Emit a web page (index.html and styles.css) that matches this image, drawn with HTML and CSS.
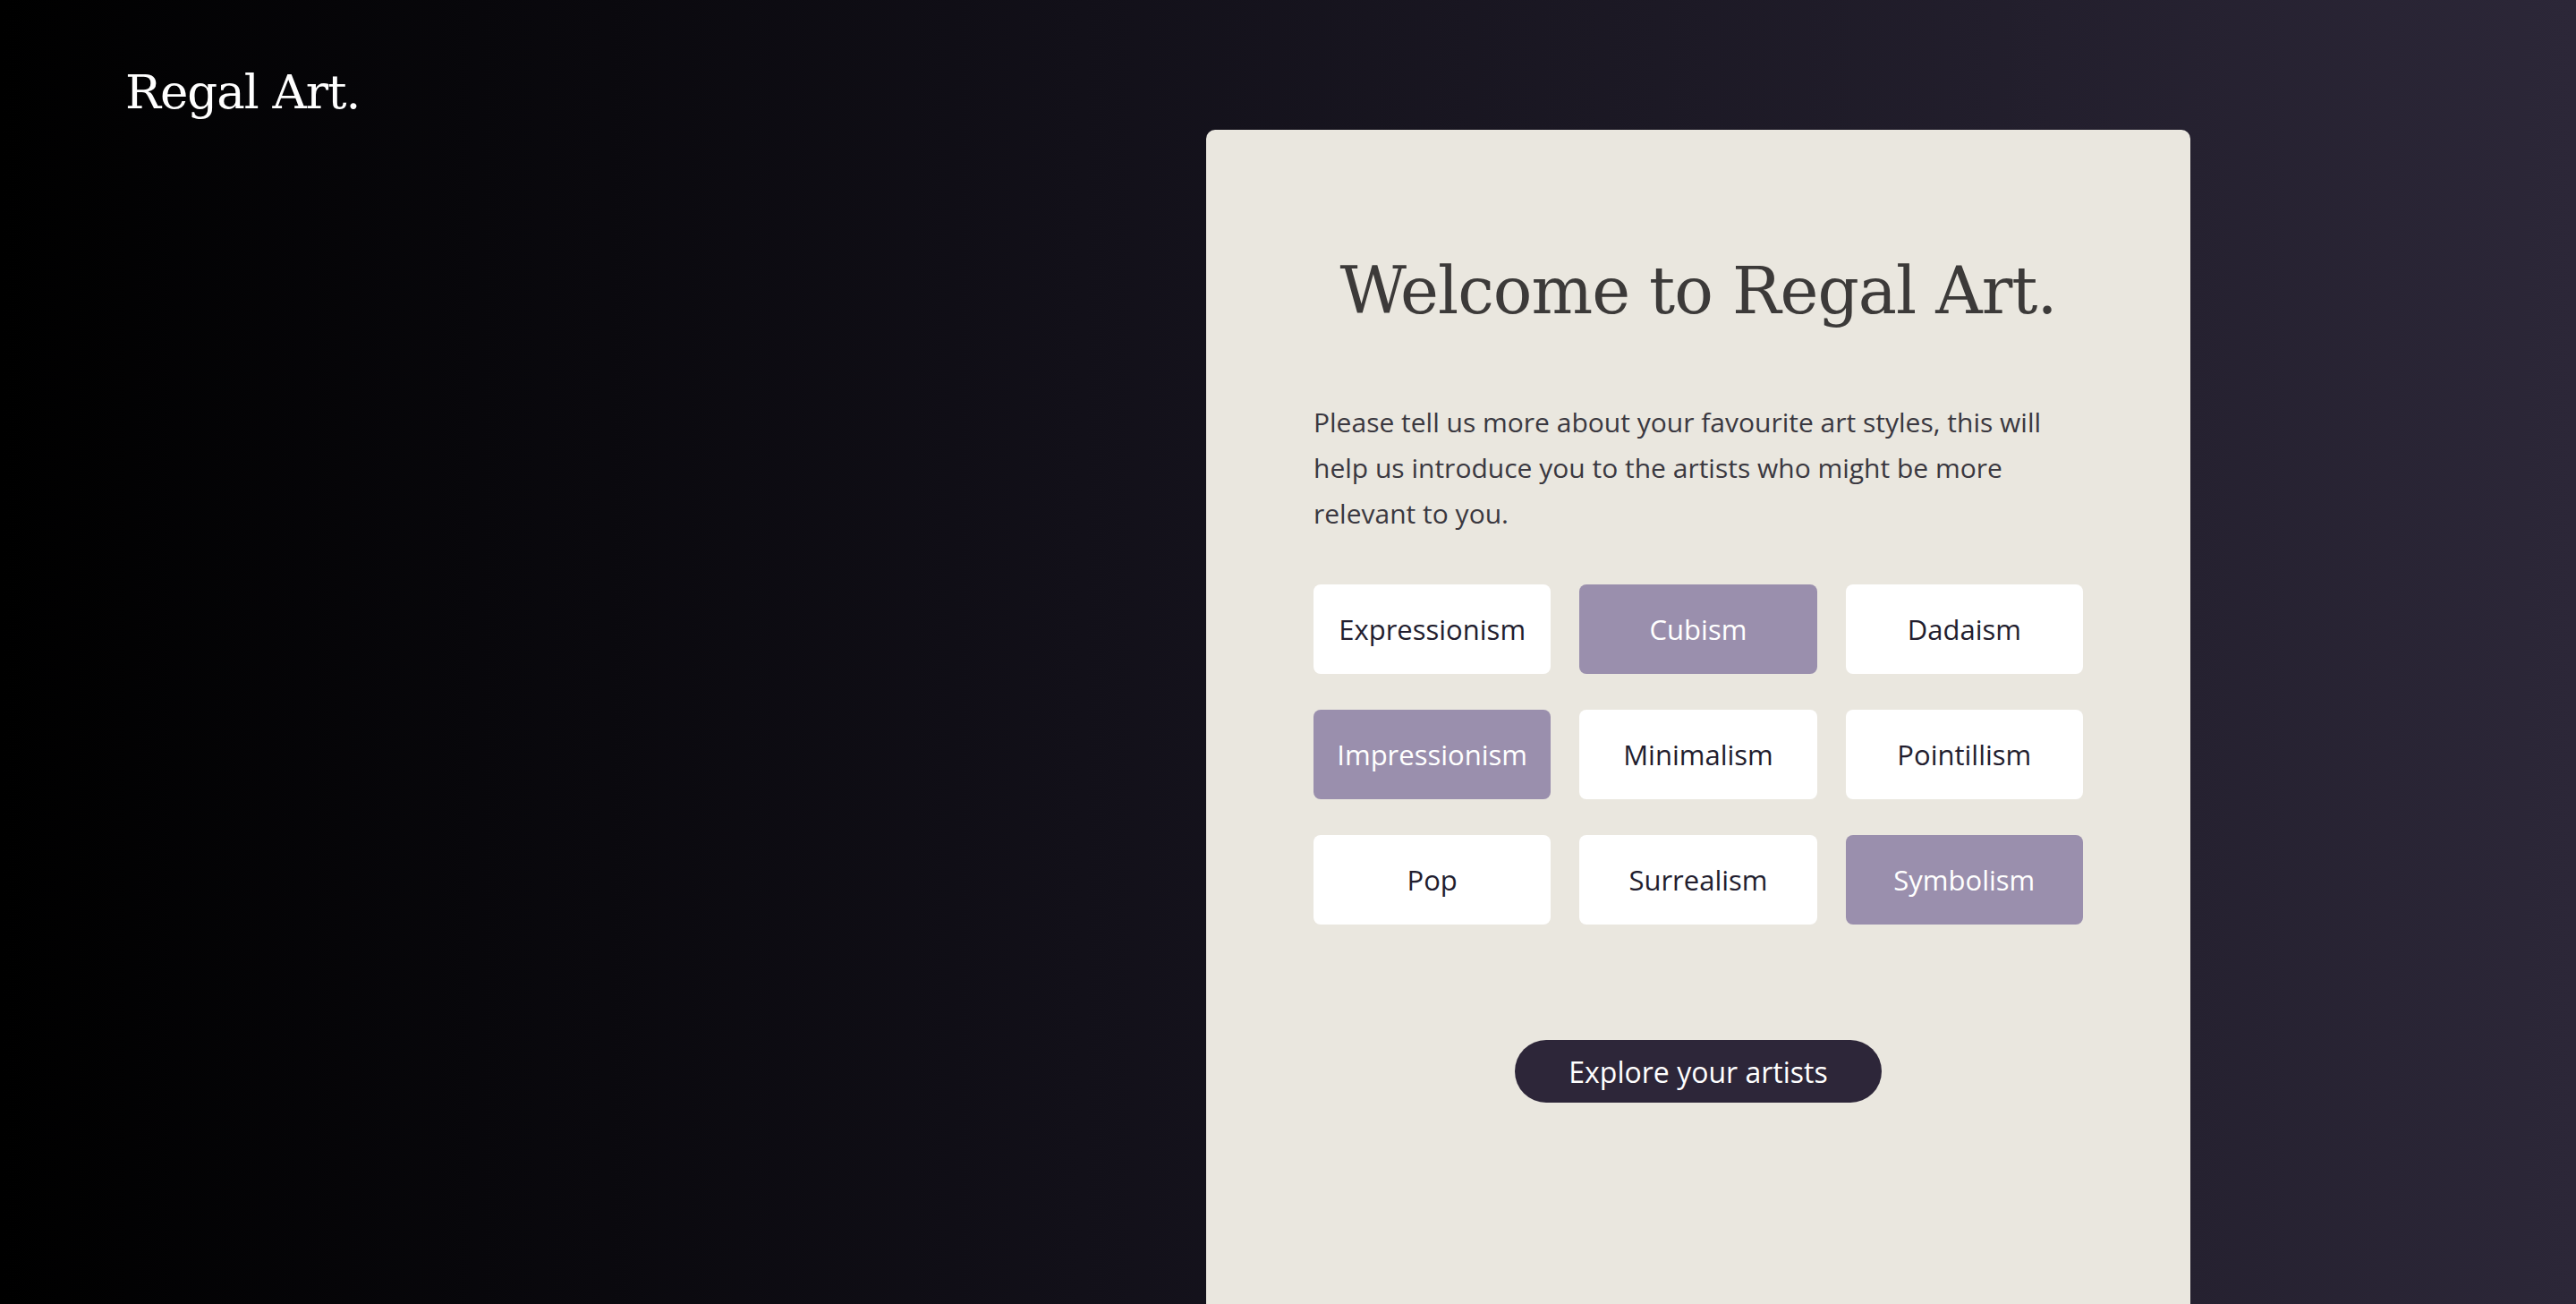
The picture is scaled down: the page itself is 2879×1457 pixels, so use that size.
FILE: index.html
```html
<!DOCTYPE html>
<html lang="en">
<head>
<meta charset="utf-8">
<title>Regal Art.</title>
<link rel="stylesheet" href="styles.css">
</head>
<body>
<div class="page">
  <header class="topbar">
    <div class="logo">Regal Art.</div>
  </header>
  <main class="stage">
    <section class="card">
      <h1 class="title">Welcome to Regal Art.</h1>
      <p class="intro">Please tell us more about your favourite art styles, this will help us introduce you to the artists who might be more relevant to you.</p>
      <div class="styles-grid">
        <button class="chip">Expressionism</button>
        <button class="chip chip-on">Cubism</button>
        <button class="chip">Dadaism</button>
        <button class="chip chip-on">Impressionism</button>
        <button class="chip">Minimalism</button>
        <button class="chip">Pointillism</button>
        <button class="chip">Pop</button>
        <button class="chip">Surrealism</button>
        <button class="chip chip-on">Symbolism</button>
      </div>
      <div class="cta-row">
        <button class="cta">Explore your artists</button>
      </div>
    </section>
  </main>
</div>
</body>
</html>
```
FILE: styles.css
```css
html, body {
  margin: 0;
  padding: 0;
  height: 100%;
  overflow: hidden;
}
body {
  background: linear-gradient(to right, #000000 0%, #121019 42%, #2c2738 100%);
  font-family: "Open Sans", "Liberation Sans", sans-serif;
}
.page {
  height: 100vh;
}
.topbar {
  padding: 76px 0 0 140px;
}
.logo {
  font-family: "DejaVu Serif", "Liberation Serif", serif;
  font-size: 53px;
  color: #ffffff;
  line-height: 53px;
  letter-spacing: -1px;
}
.stage {
  display: flex;
  padding: 16px 0 0 1348px;
}
.card {
  width: 1100px;
  height: 1400px;
  box-sizing: border-box;
  background: #eae7df;
  border-radius: 10px;
  padding: 137px 120px 0 120px;
}
.title {
  margin: 0;
  text-align: center;
  font-family: "DejaVu Serif", "Liberation Serif", serif;
  font-weight: normal;
  font-size: 72.5px;
  line-height: 1.2;
  color: #3c3a39;
  letter-spacing: -1px;
}
.intro {
  margin: 77px 0 0 0;
  font-size: 30px;
  line-height: 51px;
  color: #3a3840;
}
.styles-grid {
  margin-top: 54px;
  display: grid;
  grid-template-columns: repeat(3, 1fr);
  column-gap: 32px;
  row-gap: 40px;
}
.chip {
  height: 100px;
  border: none;
  border-radius: 8px;
  background: #ffffff;
  color: #221d2e;
  font-family: "Open Sans", "Liberation Sans", sans-serif;
  font-size: 31px;
  padding: 0;
}
.chip-on {
  background: #9a8fad;
  color: #ffffff;
}
.cta-row {
  display: flex;
  justify-content: center;
  margin-top: 129px;
}
.cta {
  width: 410px;
  height: 70px;
  border: none;
  border-radius: 35px;
  background: #2d2639;
  color: #ffffff;
  font-family: "Open Sans", "Liberation Sans", sans-serif;
  font-size: 32px;
}
```
